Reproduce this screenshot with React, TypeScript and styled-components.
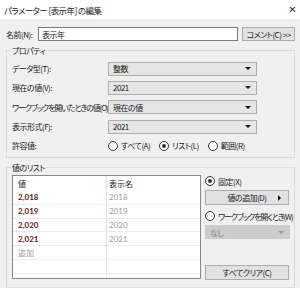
import React from 'react';
import styled, {createGlobalStyle} from 'styled-components';

const GlobalStyle = createGlobalStyle`
    html, body {
        margin: 0;
        padding: 0;
        background: #f0f0f0;
    }
    body {
        font-family: "Noto Sans CJK JP", "DejaVu Sans", sans-serif;
        font-size: 8px;
        font-feature-settings: "palt";
        letter-spacing: -0.5px;
        color: #1a1a1a;
        white-space: nowrap;
    }
`;

const Dialog = styled.div`
    width: 300px;
    height: 288px;
    overflow: hidden;
    background: #f0f0f0;
    display: flex;
    flex-direction: column;
`;

const TitleBar = styled.div`
    height: 19px;
    background: #ffffff;
    display: flex;
    align-items: center;
    justify-content: space-between;
    padding: 0 4px 0 4px;
    font-size: 8.5px;
    letter-spacing: -0.6px;
    color: #222;
`;

const Close = styled.span`
    font-size: 10px;
    color: #333;
    font-family: "DejaVu Sans", sans-serif;
`;

const Body = styled.div`
    padding: 8px 5px 0 6px;
    display: flex;
    flex-direction: column;
`;

const NameRow = styled.div`
    display: flex;
    align-items: center;
    height: 14px;
`;

const NameLabel = styled.span`
    width: 32px;
`;

const TextBox = styled.div`
    width: 196px;
    height: 12px;
    background: #fff;
    border: 1px solid #7a7a7a;
    display: flex;
    align-items: center;
    padding-left: 3px;
    box-sizing: content-box;
    margin-right: 4px;
`;

const Button = styled.div<{ $w: number; $h?: number }>`
    width: ${p => p.$w}px;
    height: ${p => p.$h ?? 13}px;
    background: #e1e1e1;
    border: 1px solid #adadad;
    display: flex;
    align-items: center;
    justify-content: center;
    position: relative;
    box-sizing: content-box;
`;

const Group = styled.fieldset<{ $h: number }>`
    margin: 0;
    padding: 0;
    border: 1px solid #dcdcdc;
    height: ${p => p.$h}px;
    box-sizing: border-box;
    min-width: 0;
`;

const Legend = styled.legend`
    padding: 0 1px;
    margin-left: 4px;
    line-height: 9px;
`;

const PropGrid = styled.div`
    display: grid;
    grid-template-columns: 96px 149px;
    grid-auto-rows: 19.3px;
    align-items: center;
    padding: 4px 0 0 5px;
`;

const Label = styled.span<{ $tight?: boolean }>`
    white-space: nowrap;
    letter-spacing: ${p => p.$tight ? '-1.1px' : 'inherit'};
`;

const Select = styled.div<{ $disabled?: boolean }>`
    height: 12px;
    background: ${p => p.$disabled ? '#cccccc' : '#e5e5e5'};
    border: 1px solid ${p => p.$disabled ? '#cccccc' : '#adadad'};
    display: flex;
    align-items: center;
    justify-content: space-between;
    padding: 0 5px 0 4px;
    color: ${p => p.$disabled ? '#8a8a8a' : '#1a1a1a'};
    box-sizing: content-box;
`;

const Arrow = styled.span<{ $disabled?: boolean }>`
    width: 0;
    height: 0;
    border-left: 3px solid transparent;
    border-right: 3px solid transparent;
    border-top: 3px solid ${p => p.$disabled ? '#a0a0a0' : '#111'};
`;

const RadioRow = styled.div`
    display: flex;
    align-items: center;
    gap: 9px;
`;

const RadioItem = styled.span<{ $tight?: boolean }>`
    display: flex;
    align-items: center;
    gap: 3px;
    height: 12px;
    white-space: nowrap;
    letter-spacing: ${p => p.$tight ? '-1.1px' : 'inherit'};
`;

const Circle = styled.span<{ $on?: boolean }>`
    width: 8px;
    height: 8px;
    flex: none;
    border: 1px solid #333;
    border-radius: 50%;
    background: #fff;
    display: flex;
    align-items: center;
    justify-content: center;
    &::after {
        content: '';
        width: 4px;
        height: 4px;
        border-radius: 50%;
        background: ${p => p.$on ? '#333' : 'transparent'};
    }
`;

const ListArea = styled.div`
    display: flex;
    padding: 3px 0 0 5px;
    gap: 4px;
`;

const ListBox = styled.div`
    width: 187px;
    height: 102px;
    background: #fff;
    border: 1px solid #828790;
    overflow: hidden;
    box-sizing: content-box;
`;

const ListRow = styled.div<{ $head?: boolean }>`
    display: grid;
    grid-template-columns: 94px 1fr;
    height: ${p => p.$head ? 15 : 13.8}px;
    border-bottom: 1px solid ${p => p.$head ? '#ffffff' : '#ececec'};
    box-sizing: border-box;
`;

const Cell = styled.span<{ $kind?: 'value' | 'name' | 'add' | 'head' }>`
    display: flex;
    align-items: center;
    padding-left: 5px;
    letter-spacing: 0;
    border-right: 1px solid #e6e6e6;
    color: ${p => p.$kind === 'value' ? '#5e2218' : p.$kind === 'name' || p.$kind === 'add' ? '#9a9a9a' : '#1a1a1a'};
    font-weight: ${p => p.$kind === 'value' ? 'bold' : 'normal'};
    font-family: ${p => p.$kind === 'value' || p.$kind === 'name' ? '"Lato", "Noto Sans CJK JP", sans-serif' : 'inherit'};
    &:last-child {
        border-right: none;
        padding-left: 2px;
    }
`;

const Side = styled.div`
    display: flex;
    flex-direction: column;
    width: 85px;
    height: 105px;
`;

const Gap = styled.div<{ $h: number }>`
    height: ${p => p.$h}px;
    flex: none;
`;

const Spring = styled.div`
    flex: 1;
`;

const Tri = styled.span`
    position: absolute;
    right: 7px;
    top: 4px;
    width: 0;
    height: 0;
    border-top: 3px solid transparent;
    border-bottom: 3px solid transparent;
    border-left: 3px solid #111;
`;

const values = [
    ['2,018', '2018'],
    ['2,019', '2019'],
    ['2,020', '2020'],
    ['2,021', '2021'],
];

const App: React.FC = () => {
    return (
        <Dialog>
            <GlobalStyle />
            <TitleBar>
                <span>パラメーター [表示年] の編集</span>
                <Close>✕</Close>
            </TitleBar>
            <Body>
                <NameRow>
                    <NameLabel>名前(N):</NameLabel>
                    <TextBox>表示年</TextBox>
                    <Button $w={51} $h={12}>コメント(C) &gt;&gt;</Button>
                </NameRow>
                <Gap $h={5} />
                <Group $h={112}>
                    <Legend>プロパティ</Legend>
                    <PropGrid>
                        <Label>データ型(T):</Label>
                        <Select>整数<Arrow /></Select>
                        <Label>現在の値(V):</Label>
                        <Select>2021<Arrow /></Select>
                        <Label $tight>ワークブックを開いたときの値(O):</Label>
                        <Select>現在の値<Arrow /></Select>
                        <Label>表示形式(F):</Label>
                        <Select>2021<Arrow /></Select>
                        <Label>許容値:</Label>
                        <RadioRow>
                            <RadioItem><Circle />すべて(A)</RadioItem>
                            <RadioItem><Circle $on />リスト(L)</RadioItem>
                            <RadioItem><Circle />範囲(R)</RadioItem>
                        </RadioRow>
                    </PropGrid>
                </Group>
                <Gap $h={5} />
                <Group $h={125}>
                    <Legend>値のリスト</Legend>
                    <ListArea>
                        <ListBox>
                            <ListRow $head>
                                <Cell $kind="head">値</Cell>
                                <Cell $kind="head">表示名</Cell>
                            </ListRow>
                            {values.map(([v, n]) => (
                                <ListRow key={v}>
                                    <Cell $kind="value">{v}</Cell>
                                    <Cell $kind="name">{n}</Cell>
                                </ListRow>
                            ))}
                            <ListRow>
                                <Cell $kind="add">追加</Cell>
                                <Cell />
                            </ListRow>
                            <ListRow><Cell /><Cell /></ListRow>
                            <ListRow><Cell /><Cell /></ListRow>
                        </ListBox>
                        <Side>
                            <RadioItem><Circle $on />固定(X)</RadioItem>
                            <Gap $h={3} />
                            <Button $w={82} $h={13}>値の追加(D)<Tri /></Button>
                            <Gap $h={5} />
                            <RadioItem $tight><Circle />ワークブックを開くとき(W)</RadioItem>
                            <Gap $h={3} />
                            <Select $disabled>なし<Arrow $disabled /></Select>
                            <Spring />
                            <Button $w={82} $h={13}>すべてクリア(C)</Button>
                        </Side>
                    </ListArea>
                </Group>
            </Body>
        </Dialog>
    );
};

export default App;
